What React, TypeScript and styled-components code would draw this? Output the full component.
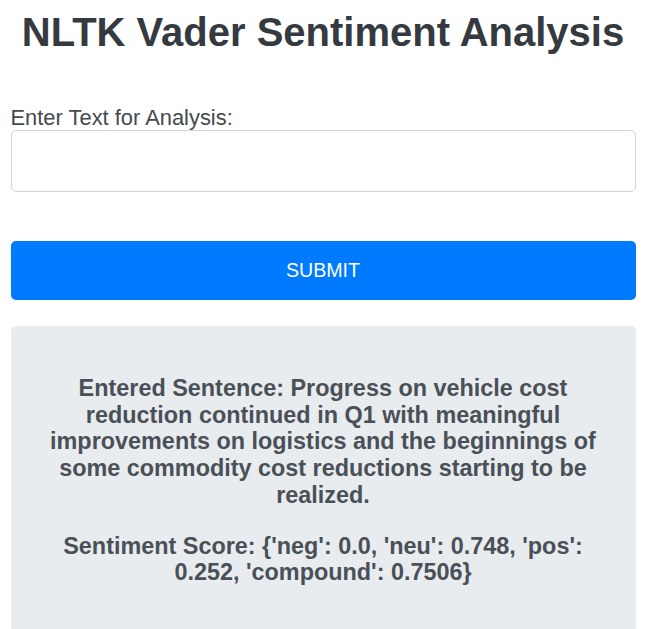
import React from "react";
import styled, { createGlobalStyle } from "styled-components";

const GlobalStyle = createGlobalStyle`
  html, body {
    margin: 0;
    padding: 0;
    background: #ffffff;
    font-family: "Liberation Sans", Arial, sans-serif;
  }
  * { box-sizing: border-box; }
`;

const Page = styled.main`
  width: 625px;
  margin: 0 auto;
  padding-top: 8px;
  display: flex;
  flex-direction: column;
`;

const Title = styled.h1`
  margin: 0;
  font-size: 40px;
  line-height: 48px;
  font-weight: 700;
  color: #343a40;
  text-align: center;
`;

const Form = styled.form`
  display: flex;
  flex-direction: column;
  margin-top: 49px;
`;

const Label = styled.label`
  font-size: 21.9px;
  line-height: 25px;
  color: #454a50;
`;

const TextInput = styled.input`
  height: 62px;
  width: 100%;
  margin: 0;
  border: 1px solid #d2d4d8;
  border-radius: 5px;
  background: #fff;
  font-family: inherit;
  font-size: 20px;
  padding: 0 12px;
  outline: none;
`;

const SubmitButton = styled.button`
  margin-top: 49px;
  height: 59px;
  width: 100%;
  border: none;
  border-radius: 5px;
  background: #007bff;
  color: #ffffff;
  font-family: inherit;
  font-size: 19.6px;
  cursor: pointer;
`;

const ResultBox = styled.section`
  margin-top: 26px;
  background: #e9ecef;
  border-radius: 5px 5px 0 0;
  padding: 49px 30px 48px;
  display: flex;
  flex-direction: column;
  gap: 24px;
`;

const ResultText = styled.p`
  margin: 0;
  font-size: 23.4px;
  line-height: 26.7px;
  font-weight: 700;
  color: #495057;
  text-align: center;
`;

const sentence =
  "Entered Sentence: Progress on vehicle cost reduction continued in Q1 with meaningful improvements on logistics and the beginnings of some commodity cost reductions starting to be realized.";
const score =
  "Sentiment Score: {'neg': 0.0, 'neu': 0.748, 'pos': 0.252, 'compound': 0.7506}";

export default function App() {
  return (
    <>
      <GlobalStyle />
      <Page>
        <Title>NLTK Vader Sentiment Analysis</Title>
        <Form onSubmit={(e) => e.preventDefault()}>
          <Label htmlFor="text">Enter Text for Analysis:</Label>
          <TextInput id="text" type="text" />
          <SubmitButton type="submit">SUBMIT</SubmitButton>
        </Form>
        <ResultBox>
          <ResultText>{sentence}</ResultText>
          <ResultText>{score}</ResultText>
        </ResultBox>
      </Page>
    </>
  );
}
